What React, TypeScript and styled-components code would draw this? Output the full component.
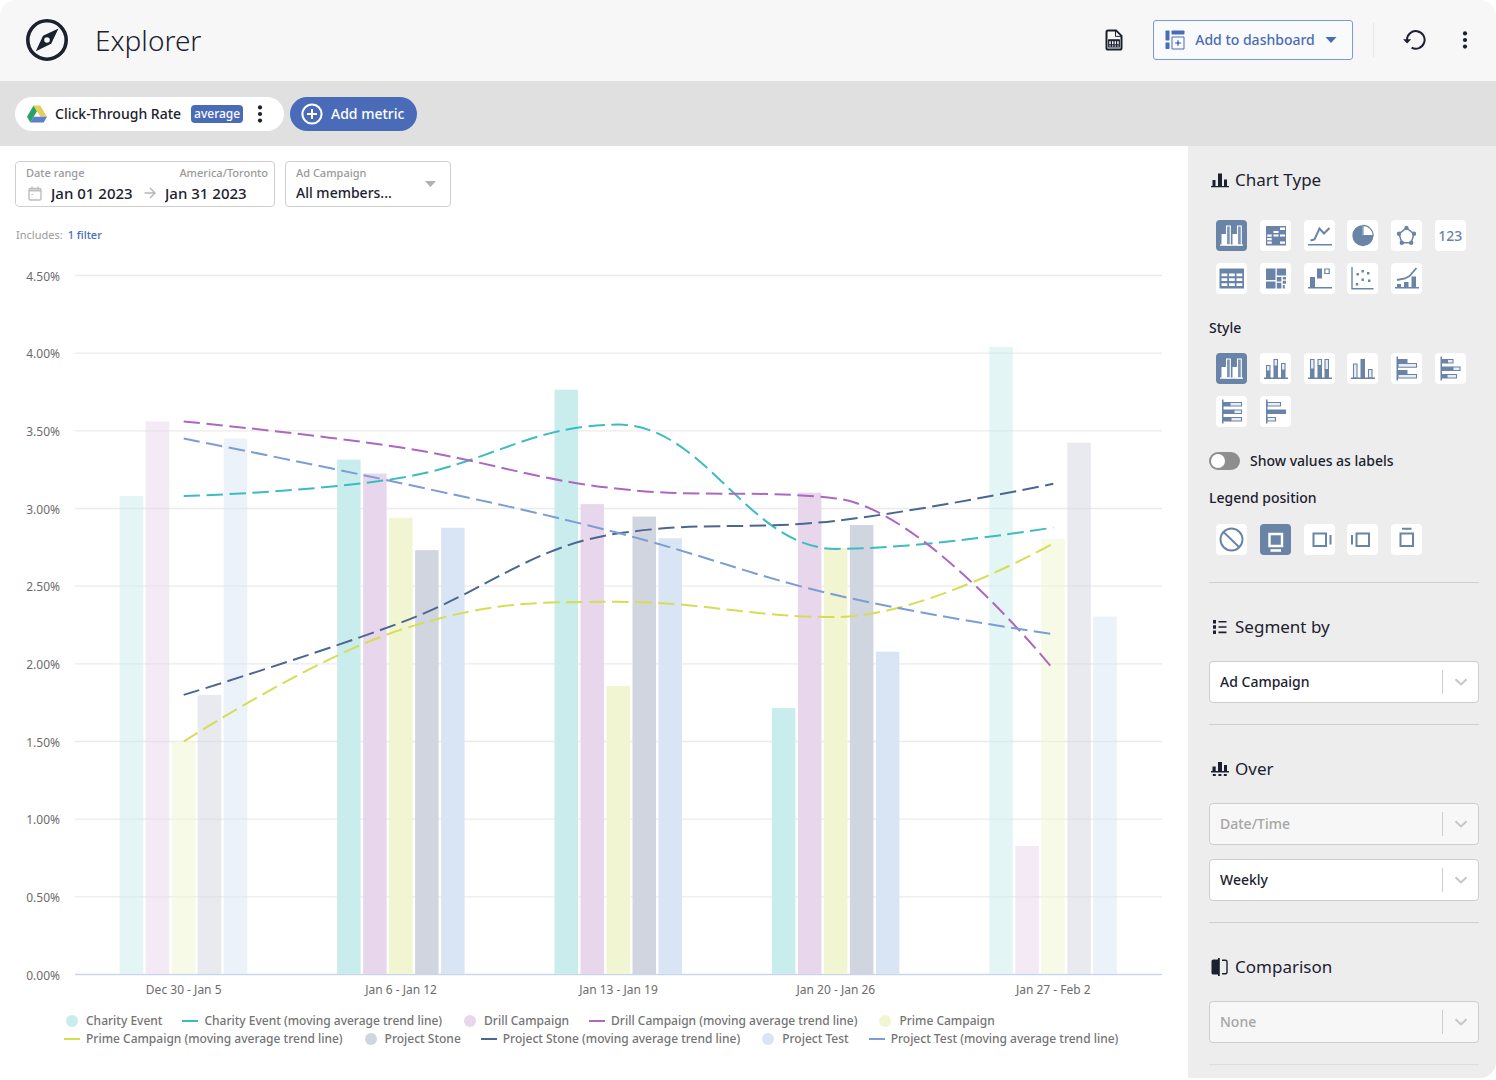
import React from 'react';
import styled, { createGlobalStyle } from 'styled-components';

const ink = '#1c2130';
const blue = '#4a6cb8';
const steel = '#6a84a8';

const GlobalStyle = createGlobalStyle`
  *, *::before, *::after { box-sizing: border-box; }
  body {
    margin: 0;
    background: #fff;
    color: ${ink};
    font-family: "Noto Sans", "Open Sans", sans-serif;
    font-size: 14px;
    line-height: 20px;
  }
  button, input, select { font: inherit; color: inherit; margin: 0; }
  button { cursor: pointer; }
  h1, h2, h3, p, ul { margin: 0; padding: 0; }
  svg { display: block; flex: none; }
`;

const Frame = styled.div`
  display: flex;
  flex-direction: column;
  border-radius: 16px;
  overflow: hidden;
  background: #fff;
`;

const Header = styled.header`
  display: flex;
  align-items: center;
  justify-content: space-between;
  height: 81px;
  padding: 0 18px 1px 26px;
  background: #f7f7f7;
`;

const Brand = styled.div`
  display: flex;
  align-items: center;
  gap: 27px;
`;

const Title = styled.h1`
  font-size: 28px;
  line-height: 40px;
  font-weight: 300;
`;

const Actions = styled.div`
  display: flex;
  align-items: center;
`;

const IconButton = styled.button<{ $gap?: number }>`
  display: flex;
  align-items: center;
  justify-content: center;
  width: 26px;
  height: 34px;
  margin-left: ${(p) => p.$gap ?? 0}px;
  padding: 0;
  border: 0;
  background: none;
`;

const DashboardButton = styled.button`
  display: flex;
  align-items: center;
  justify-content: space-between;
  width: 200px;
  height: 40px;
  margin: 0 20px 0 26px;
  padding: 0 15px 0 11px;
  border: 1px solid #7f9ad2;
  border-radius: 3px;
  background: #f9fafc;
  color: ${blue};
  font-weight: 500;
`;

const Divider = styled.span`
  width: 1px;
  height: 34px;
  margin-right: 27px;
  background: #e4e4e4;
`;

const MetricBar = styled.div`
  display: flex;
  align-items: center;
  gap: 6px;
  height: 65px;
  padding: 0 15px;
  background: #e0e0e0;
`;

const MetricPill = styled.div`
  display: flex;
  align-items: center;
  width: 269px;
  height: 34px;
  padding-left: 12px;
  border-radius: 17px;
  background: #fff;
  font-weight: 500;
`;

const MetricName = styled.span`
  flex: none;
  margin: 0 10px 0 8px;
`;

const Badge = styled.span`
  height: 18px;
  margin-right: 4px;
  padding: 0 3px;
  border-radius: 4px;
  background: ${blue};
  color: #fff;
  font-size: 12px;
  line-height: 18px;
`;

const AddMetric = styled.button`
  display: flex;
  align-items: center;
  gap: 8px;
  height: 34px;
  padding: 0 13px 0 11px;
  border: 0;
  border-radius: 17px;
  background: ${blue};
  color: #fff;
  font-weight: 500;
`;

const Body = styled.div`
  display: flex;
`;

const Main = styled.main`
  flex: 1;
  min-width: 0;
  padding-top: 15px;
`;

const Filters = styled.div`
  display: flex;
  gap: 10px;
  padding: 0 15px;
`;

const FilterBox = styled.div<{ $width: number }>`
  display: flex;
  flex-direction: column;
  width: ${(p) => p.$width}px;
  height: 46px;
  padding: 2px 6px 0 10px;
  border: 1px solid #cfcfcf;
  border-radius: 4px;
`;

const FilterLabels = styled.div`
  display: flex;
  justify-content: space-between;
  color: #9a9a9a;
  font-size: 11px;
  line-height: 18px;
  font-weight: 500;
`;

const DateLine = styled.div`
  display: flex;
  align-items: center;
  gap: 9px;
  padding-left: 2px;
`;

const DateInput = styled.input`
  width: 84px;
  height: 22px;
  padding: 0;
  border: 0;
  background: none;
  font-size: 15px;
  font-weight: 500;
`;

const FilterSelectBox = styled(FilterBox)`
  display: grid;
  grid-template: 18px 22px / 1fr;
  padding-right: 14px;
`;

const FilterLabel = styled.label`
  grid-area: 1 / 1;
  color: #9a9a9a;
  font-size: 11px;
  line-height: 18px;
  font-weight: 500;
`;

const FilterSelect = styled.select`
  grid-area: 2 / 1;
  appearance: none;
  padding: 0;
  border: 0;
  background: none;
  font-weight: 500;
`;

const FilterCaret = styled.svg`
  grid-area: 1 / 1 / 3 / 2;
  place-self: center end;
  pointer-events: none;
`;

const Includes = styled.p`
  display: flex;
  gap: 5px;
  padding: 18px 16px 5px;
  color: #9a9a9a;
  font-size: 11px;
`;

const FilterLink = styled.a`
  color: ${blue};
  text-decoration: none;
  font-weight: 500;
`;

const ChartSvg = styled.svg`
  width: 100%;
  height: auto;
`;

const ChartText = styled.text`
  fill: #6c6c6c;
  font-size: 12px;
`;

const Legend = styled.ul`
  display: flex;
  flex-wrap: wrap;
  column-gap: 20px;
  padding: 12px 40px 24px 64px;
  list-style: none;
  color: #747474;
  font-size: 12px;
  line-height: 18px;
  font-weight: 500;
`;

const LegendItem = styled.li`
  display: flex;
  align-items: center;
  gap: 6px;
`;

const Swatch = styled.span<{ $line: boolean; $color: string }>`
  width: ${(p) => (p.$line ? 16 : 12)}px;
  height: ${(p) => (p.$line ? 2 : 12)}px;
  margin: 0 ${(p) => (p.$line ? 0 : 2)}px;
  border-radius: ${(p) => (p.$line ? 0 : 6)}px;
  background: ${(p) => p.$color};
`;

const Sidebar = styled.aside`
  flex: none;
  width: 308px;
  padding: 22px 17px 13px 21px;
  background: #ededed;
`;

const Section = styled.section`
  & + & {
    margin-top: 21px;
    padding-top: 32px;
    border-top: 1px solid #d0d0d0;
  }
  &:first-child { margin-bottom: 27px; }
`;

const EndRule = styled.hr`
  height: 1px;
  margin: 21px 0 0;
  border: 0;
  background: #dcdcdc;
`;

const SectionTitle = styled.h2`
  display: flex;
  align-items: center;
  gap: 6px;
  padding-left: 2px;
  font-size: 17px;
  line-height: 24px;
  font-weight: 400;
`;

const SubTitle = styled.h3<{ $gap?: number }>`
  margin-top: ${(p) => p.$gap ?? 24}px;
  font-size: 14px;
  line-height: 20px;
  font-weight: 500;
`;

const Tiles = styled.div<{ $gap: number }>`
  display: grid;
  grid-template-columns: repeat(6, 1fr);
  justify-items: center;
  row-gap: 12px;
  margin-top: ${(p) => p.$gap}px;
  padding: 0 7px 0 1px;
`;

const Tile = styled.button<{ $active: boolean }>`
  display: flex;
  align-items: center;
  justify-content: center;
  width: 31px;
  height: 31px;
  padding: 0;
  border: 0;
  border-radius: 4px;
  background: ${(p) => (p.$active ? steel : '#fff')};
  color: ${(p) => (p.$active ? '#fff' : steel)};
  font-size: 14px;
  font-weight: 500;
`;

const SwitchLabel = styled.label`
  display: flex;
  align-items: center;
  gap: 10px;
  margin: 24px 0 17px;
  font-weight: 500;
`;

const Switch = styled.input`
  appearance: none;
  display: flex;
  align-items: center;
  width: 31px;
  height: 18px;
  padding: 0 2px;
  border-radius: 9px;
  background: #8e8e8e;
  &::before {
    content: '';
    width: 14px;
    height: 14px;
    border-radius: 7px;
    background: #fff;
  }
  &:checked { justify-content: flex-end; background: ${blue}; }
`;

const SelectBox = styled.div`
  display: grid;
  align-items: center;
  margin-top: 22px;
  & + & { margin-top: 14px; }
`;

const Select = styled.select`
  grid-area: 1 / 1;
  appearance: none;
  width: 100%;
  height: 42px;
  padding: 0 50px 0 10px;
  border: 1px solid #cdcdcd;
  border-radius: 4px;
  background: #fff;
  font-weight: 500;
  &:disabled { background: #f7f7f7; color: #a6a6a6; opacity: 1; }
`;

const Indicator = styled.span`
  grid-area: 1 / 1;
  justify-self: end;
  display: flex;
  align-items: center;
  width: 37px;
  height: 24px;
  border-left: 1px solid #cdcdcd;
  padding-left: 11px;
  pointer-events: none;
`;

/* ---- icons ---- */

const Kebab = () => (
  <svg width="6" height="20" viewBox="0 0 6 20" fill={ink}>
    <circle cx="3" cy="3.4" r="2.1" /><circle cx="3" cy="10" r="2.1" /><circle cx="3" cy="16.6" r="2.1" />
  </svg>
);

const Compass = () => (
  <svg width="42" height="42" viewBox="0 0 42 42">
    <circle cx="21" cy="21" r="19.2" fill="none" stroke={ink} strokeWidth="3.600" />
    <path fillRule="evenodd" fill={ink} d="M32.5 9.5 25.2 24.8 9.8 32.2 17 16.8ZM21 18.2a2.8 2.8 0 1 0 0 5.6 2.8 2.8 0 0 0 0-5.6Z" />
  </svg>
);

const SheetIcon = () => (
  <svg width="18" height="22" viewBox="0 0 18 22" fill="none" stroke={ink}>
    <path strokeWidth="2" d="M1.5 3q0-1.6 1.6-1.6H11l5.5 5.5V19q0 1.6-1.6 1.6H3.1q-1.6 0-1.6-1.6Z" />
    <path strokeWidth="1" d="M10.5 2v5.4H16" />
    <path strokeWidth="1.2" d="M3.700 11.500h10.600v6.500H3.700ZM3.700 15.800h10.600M6.400 11.500v6.500M9 11.500v6.500M11.600 11.500v6.500" />
    <path strokeWidth="2" d="M3.200 11.200h11.600" />
  </svg>
);

const DashboardIcon = () => (
  <svg width="20" height="20" viewBox="0 0 20 20" fill={blue}>
    <rect x="0.5" y="0.5" width="4" height="10" rx="0.8" />
    <rect x="0.5" y="12.5" width="4" height="6.5" rx="0.8" />
    <rect x="6.5" y="0.5" width="13" height="4" rx="0.8" />
    <path fill="none" stroke={blue} d="M7 7h12v12H7ZM13 10v6M10 13h6" />
    <path d="M13 11.3 14.7 13 13 14.7 11.3 13Z" />
  </svg>
);

const Caret = ({ color }: { color: string }) => (
  <svg width="12" height="6" viewBox="0 0 12 6"><path fill={color} d="M0.5 0h11L6 6Z" /></svg>
);

const ResetIcon = () => (
  <svg width="23" height="22" viewBox="0 0 23 22">
    <path fill="none" stroke={ink} strokeWidth="2" d="M4 12.500V11A8.800 8.800 0 1 1 8.600 18.600" />
    <path fill={ink} d="M0 10.2h8.2L4.1 14.4Z" />
  </svg>
);

const DriveIcon = () => (
  <svg width="20" height="18" viewBox="0 0 20 18">
    <path fill="#2aa263" d="M6.6 0.4 0 11.8 3.3 17.5 10 6.2Z" />
    <path fill="#e3d05a" d="M6.6 0.4h6.7L20 11.8h-6.6Z" />
    <path fill="#5b7fd0" d="M3.3 17.5 6.7 11.8H20l-3.3 5.7Z" />
  </svg>
);

const PlusCircle = () => (
  <svg width="22" height="22" viewBox="0 0 22 22" fill="none" stroke="#fff" strokeWidth="2">
    <circle cx="11" cy="11" r="9.6" /><path d="M11 6v10M6 11h10" />
  </svg>
);

const CalendarIcon = () => (
  <svg width="14" height="15" viewBox="0 0 14 15" fill="none" stroke="#bdbdbd">
    <rect x="1" y="2.5" width="12" height="11.5" rx="1.5" strokeWidth="1.4" />
    <path strokeWidth="1.800" d="M1 4.500h12" />
    <path strokeWidth="1.400" d="M4 0.500v3M10 0.500v3" />
    <path d="M3.500 8.500h1.500" />
  </svg>
);

const ArrowIcon = () => (
  <svg width="12" height="12" viewBox="0 0 12 12" fill="none" stroke="#b5b5b5" strokeWidth="1.4">
    <path d="M0.5 6h10M6 1l5 5-5 5" />
  </svg>
);

const Chevron = () => (
  <svg width="14" height="8" viewBox="0 0 14 8" fill="none" stroke="#c6c6c6" strokeWidth="2">
    <path d="M1.5 1.2 7 6.4l5.5-5.2" />
  </svg>
);

const BarsIcon = () => (
  <svg width="18" height="16" viewBox="0 0 18 16" fill={ink}>
    <path d="M1.5 8h3v6h-3ZM7 1.5h4V14H7ZM13 7.5h3V14h-3ZM0 14h18v1.2H0Z" />
  </svg>
);

const ListIcon = () => (
  <svg width="18" height="16" viewBox="0 0 18 16" fill={ink}>
    <path d="M2 1h3v3.4H2ZM2 6.3h3v3.4H2ZM2 11.6h3V15H2ZM7.5 2h8v1.6h-8ZM7.5 7.2h8v1.6h-8ZM7.5 12.6h8v1.6h-8Z" />
  </svg>
);

const OverIcon = () => (
  <svg width="18" height="16" viewBox="0 0 18 16" fill={ink}>
    <path d="M1.5 5.5h3.2V10H1.5ZM7 1h4v9H7ZM13 4h3v6h-3ZM0 10h18v1.4H0ZM1.8 13h3v2h-3ZM7.4 13h3v2h-3ZM12.8 13h3v2h-3Z" />
  </svg>
);

const CompareIcon = () => (
  <svg width="18" height="18" viewBox="0 0 18 18" fill={ink}>
    <path d="M2.4 1.5H7V0h1.800v18H7v-1.500H2.400Q0.500 16.500 0.500 15V3Q0.500 1.500 2.400 1.500Z" />
    <path fill="none" stroke={ink} strokeWidth="1.4" d="M11 2.300h3.500q1.500 0 1.500 1.500v10.400q0 1.500-1.500 1.500H11" />
  </svg>
);

/* Shapes of a tile glyph on a 31-unit grid: f = solid, o = outlined, w = knocked out, l = stroked path. */
type Glyph = { f?: string; o?: string; w?: string; l?: string; lw?: number };

const Mark = ({ g }: { g: Glyph }) => (
  <svg width="31" height="31" viewBox="0 0 31 31">
    {g.f && <path d={g.f} fill="currentColor" />}
    {g.o && <path d={g.o} fill="currentColor" fillOpacity="0.14" stroke="currentColor" strokeWidth="1.1" />}
    {g.w && <path d={g.w} fill="#fff" />}
    {g.l && <path d={g.l} fill="none" stroke="currentColor" strokeWidth={g.lw ?? 1.8} />}
  </svg>
);

const clustered: Glyph = {
  f: 'M4 24.500h23v1.300H4ZM5.500 14h4.500v11h-4.500ZM16.500 14h4.500v11h-4.500Z',
  o: 'M10.500 6h3.800v19h-3.800ZM21.500 6h3.800v19h-3.800Z',
};

const chartTypes: { name: string; glyph?: Glyph }[] = [
  { name: 'Column chart', glyph: clustered },
  {
    name: 'Heat map',
    glyph: {
      f: 'M6 6h20v19.500H6Z',
      w: 'M20 7.500h5v2.500h-5ZM13.500 11h5v2h-5ZM13.500 14.500h5v2h-5ZM7.200 14.500h4.500v2.200H7.200ZM7.200 18h4.500v2.200H7.200ZM7.200 21.500h4.500v2.300H7.200ZM20 14.500h5v2h-5ZM20 21.500h5v2.300h-5Z',
    },
  },
  { name: 'Line chart', glyph: { l: 'M6.500 20.500 10.500 19.500 15.500 8.500 20 13.500 25.500 8', lw: 2, f: 'M4 24h24v1.600H4Z' } },
  {
    name: 'Pie chart',
    glyph: { f: 'M15.500 5A10.600 10.600 0 1 0 26.500 16H15.500Z', l: 'M16 5.400V15.500h10.200A10.200 10.200 0 0 0 16 5.400Z', lw: 1.1 },
  },
  {
    name: 'Radar chart',
    glyph: {
      l: 'M15.500 8 23 13.800 20.200 22.800H10.800L8 13.800Z',
      lw: 1.5,
      f: 'M15.500 5.700a2.200 2.200 0 1 1 0 4.400 2.200 2.200 0 1 1 0-4.400ZM23 11.600a2.200 2.200 0 1 1 0 4.400 2.200 2.200 0 1 1 0-4.400ZM8 11.600a2.200 2.200 0 1 1 0 4.400 2.200 2.200 0 1 1 0-4.400ZM20.200 20.600a2.200 2.200 0 1 1 0 4.400 2.200 2.200 0 1 1 0-4.400ZM10.800 20.600a2.200 2.200 0 1 1 0 4.400 2.200 2.200 0 1 1 0-4.400Z',
    },
  },
  { name: 'Number' },
  {
    name: 'Table',
    glyph: {
      f: 'M3.500 5.500h24.500v20H3.500Z',
      w: 'M5.500 10.500h5.800v2.800H5.500ZM13 10.500h5.800v2.800H13ZM20.500 10.500h5.800v2.800h-5.800ZM5.500 15.300h5.800v2.800H5.500ZM13 15.300h5.800v2.800H13ZM20.500 15.300h5.800v2.800h-5.800ZM5.500 20.200h5.800v2.800H5.500ZM13 20.200h5.800v2.800H13ZM20.500 20.200h5.800v2.800h-5.800Z',
    },
  },
  {
    name: 'Tree map',
    glyph: { f: 'M6 5.500h9.500v11.500H6ZM16.800 5.500H26v7h-9.200ZM6 18.500h9.500v7H6ZM16.800 14h4.600v4.500h-4.600ZM16.800 19.800h4.600v5.700h-4.600ZM22.800 14H26v2.600h-3.200ZM22.800 17.800H26v3h-3.200ZM22.800 22h2v3.500h-2Z' },
  },
  {
    name: 'Waterfall chart',
    glyph: { f: 'M4 24h24v1.500H4ZM6 14h5v11H6ZM13 5.500h5v10h-5Z', l: 'M20.800 6h4.400v4.500h-4.400Z', lw: 1.2 },
  },
  {
    name: 'Scatter plot',
    glyph: {
      l: 'M5 4v21.800h21.500',
      lw: 1.4,
      f: 'M9.500 10h2.400v2.400H9.500ZM14.500 7h2.400v2.400h-2.400ZM20 9h2.400v2.400H20ZM14.500 15.500h2.400v2.400h-2.400ZM21 16.500h2.400v2.400H21ZM8.800 20h2.400v2.400H8.800Z',
    },
  },
  {
    name: 'Combination chart',
    glyph: { f: 'M4 24h24v1.500H4ZM6 21h4v4H6ZM13 19h4.500v6H13ZM20.500 13.500H25V25h-4.500Z', l: 'M6 17 14 15.500 18.500 13 25.500 5', lw: 1.8 },
  },
];

const styles: { name: string; glyph: Glyph }[] = [
  { name: 'Clustered column', glyph: clustered },
  {
    name: 'Stacked column',
    glyph: { f: 'M4 24.500h24v1.400H4ZM6 18h4.500v7H6ZM13.500 13h4.500v12h-4.500ZM21 17h4.500v8H21Z', o: 'M6.500 12.500H10V18H6.500ZM14 6.500h3.500V13H14ZM21.500 10.500H25V17h-3.500Z' },
  },
  {
    name: 'Full stacked column',
    glyph: { f: 'M4 24.500h24v1.400H4ZM6 16h4.500v9H6ZM13.500 12.500h4.500V25h-4.500ZM20.500 16.500H25V25h-4.500Z', o: 'M6.500 6.500H10V16H6.500ZM14 6.500h3.500v6H14ZM21 6.500h3.500v10H21Z' },
  },
  {
    name: 'Overlapping column',
    glyph: { f: 'M4 24.500h24v1.400H4ZM13.500 6H18v19h-4.500Z', o: 'M6.500 11H10v14H6.500ZM21.500 16.500H25V25h-3.500Z' },
  },
  {
    name: 'Clustered bar',
    glyph: { f: 'M5.500 3.500H7v24H5.500ZM7 6h9.500v4H7ZM7 17h9.500v4H7Z', o: 'M7 10.500h18.500v3.700H7ZM7 21.500h18.500v3.500H7Z' },
  },
  {
    name: 'Stacked bar',
    glyph: { f: 'M5.500 3.500H7v24H5.500ZM7 6h5.500v4.500H7ZM7 13.500h11V18H7ZM7 21h5v4.500H7Z', o: 'M12.500 6.500H18V10h-5.500ZM18 14h7v3.500h-7ZM12 21.500h9.500V25H12Z' },
  },
  {
    name: 'Full stacked bar',
    glyph: { f: 'M6 3.500h1.500v24H6ZM7 6h7v4.500H7ZM7 13.500h11V18H7ZM7 21h8v4.500H7Z', o: 'M14 6.500h11.500V10H14ZM18 14h7.500v3.500H18ZM15 21.500h10.500V25H15Z' },
  },
  {
    name: 'Overlapping bar',
    glyph: { f: 'M6 3.500h1.500v24H6ZM7 13.500h19V18H7Z', o: 'M7 6.500h13.500V10H7ZM7 21.500h8.500V25H7Z' },
  },
];

const positions: { name: string; glyph: Glyph }[] = [
  { name: 'No legend', glyph: { l: 'M15.500 4.500a11 11 0 1 1 0 22 11 11 0 1 1 0-22ZM7.500 8l16 15.500', lw: 1.9 } },
  { name: 'Legend at the bottom', glyph: { l: 'M9.500 10h12.500v12H9.500ZM10.500 26.500h10.500', lw: 2.4 } },
  { name: 'Legend on the right', glyph: { l: 'M9.500 9.500h12.500v12.500H9.500ZM26.500 11v9.500', lw: 2 } },
  { name: 'Legend on the left', glyph: { l: 'M9.500 9.500h12.500v12.500H9.500ZM5 11v9.500', lw: 2 } },
  { name: 'Legend at the top', glyph: { l: 'M9.500 9.500h12.500v12.500H9.500ZM11 4.800h9.500', lw: 2 } },
];

/* ---- chart ---- */

const PLOT = { left: 75, right: 1162, top: 275.5, bottom: 974.5, max: 4.5 };
const weeks = ['Dec 30 - Jan 5', 'Jan 6 - Jan 12', 'Jan 13 - Jan 19', 'Jan 20 - Jan 26', 'Jan 27 - Feb 2'];
const ticks = [4.5, 4, 3.5, 3, 2.5, 2, 1.5, 1, 0.5, 0];

const series = [
  { name: 'Charity Event', bar: '#c9ecec', line: '#3dbcc0', values: [3.08, 3.315, 3.765, 1.715, 4.04] },
  { name: 'Drill Campaign', bar: '#e7d6ec', line: '#ad67c1', values: [3.56, 3.225, 3.028, 3.102, 0.828] },
  { name: 'Prime Campaign', bar: '#f2f5d1', line: '#d5de52', values: [1.5, 2.94, 1.858, 2.744, 2.806] },
  { name: 'Project Stone', bar: '#d1d5e0', line: '#4b6791', values: [1.8, 2.732, 2.948, 2.894, 3.424] },
  { name: 'Project Test', bar: '#d9e5f4', line: '#7a9dd6', values: [3.45, 2.876, 2.808, 2.078, 2.304] },
];

const step = (PLOT.right - PLOT.left) / weeks.length;
const centre = (i: number) => PLOT.left + step * (i + 0.5);
const yOf = (v: number) => PLOT.bottom - (v / PLOT.max) * (PLOT.bottom - PLOT.top);

/* Two-period moving average; the first period has only itself. */
const trend = (v: number[]) => v.map((x, i) => (i ? (x + v[i - 1]) / 2 : x));

/* Smooth path whose control points never overshoot the neighbouring values. */
function spline(values: number[]) {
  const pts = values.map((v, i) => [centre(i), yOf(v)]);
  let out = `M${pts[0][0]} ${pts[0][1]}`;
  let [rx, ry] = pts[0];
  for (let i = 1; i < pts.length; i++) {
    const [x, y] = pts[i];
    const [px, py] = pts[i - 1];
    let [lx, ly, nx, ny] = [x, y, x, y];
    if (i < pts.length - 1) {
      const [qx, qy] = pts[i + 1];
      lx = (1.5 * x + px) / 2.5;
      ly = (1.5 * y + py) / 2.5;
      nx = (1.5 * x + qx) / 2.5;
      ny = (1.5 * y + qy) / 2.5;
      const fix = ((ny - ly) * (nx - x)) / (nx - lx) + y - ny;
      ly += fix;
      ny += fix;
      const clamp = (c: number, a: number, b: number) => Math.min(Math.max(c, Math.min(a, b)), Math.max(a, b));
      const cl = clamp(ly, py, y);
      if (cl !== ly) { ly = cl; ny = 2 * y - ly; }
      const cn = clamp(ny, qy, y);
      if (cn !== ny) { ny = cn; ly = 2 * y - ny; }
    }
    out += `C${rx} ${ry} ${lx} ${ly} ${x} ${y}`;
    [rx, ry] = [nx, ny];
  }
  return out;
}

const Chart = () => (
  <ChartSvg viewBox="0 250 1188 750" role="img" aria-label="Click-Through Rate by Ad Campaign, weekly">
    {ticks.map((t) => (
      <g key={t}>
        <line x1={PLOT.left} x2={PLOT.right} y1={yOf(t)} y2={yOf(t)} stroke={t ? '#ebebeb' : '#ccd6eb'} strokeWidth="1.4" />
        <ChartText x="60" y={yOf(t) + 5} textAnchor="end">{t.toFixed(2)}%</ChartText>
      </g>
    ))}
    {weeks.map((w, i) => (
      <ChartText key={w} x={centre(i)} y="994" textAnchor="middle">{w}</ChartText>
    ))}
    {series.map((s, k) =>
      s.values.map((v, i) => (
        <rect
          key={`${s.name}${i}`}
          x={centre(i) - 64 + 26 * k}
          y={yOf(v)}
          width="23.500"
          height={PLOT.bottom - yOf(v)}
          fill={s.bar}
          opacity={i === 0 || i === 4 ? 0.5 : 1}
        />
      )),
    )}
    <line x1={PLOT.left} x2={PLOT.right} y1={PLOT.bottom} y2={PLOT.bottom} stroke="#ccd6eb" strokeWidth="1" />
    {series.map((s) => (
      <path key={s.name} d={spline(trend(s.values))} fill="none" stroke={s.line} strokeWidth="2" strokeDasharray="16.500 6.450" />
    ))}
  </ChartSvg>
);

const TileSet = ({ items, selected, gap, label }: { items: { name: string; glyph?: Glyph }[]; selected: number; gap: number; label: string }) => (
  <Tiles $gap={gap} role="group" aria-label={label}>
    {items.map((it, i) => (
      <Tile key={it.name} type="button" $active={i === selected} aria-pressed={i === selected} aria-label={it.name}>
        {it.glyph ? <Mark g={it.glyph} /> : '123'}
      </Tile>
    ))}
  </Tiles>
);

const Dropdown = ({ label, value, disabled }: { label: string; value: string; disabled?: boolean }) => (
  <SelectBox>
    <Select aria-label={label} disabled={disabled} defaultValue={value}>
      <option>{value}</option>
    </Select>
    <Indicator><Chevron /></Indicator>
  </SelectBox>
);

export default function App() {
  return (
    <>
      <GlobalStyle />
      <Frame>
        <Header>
          <Brand>
            <Compass />
            <Title>Explorer</Title>
          </Brand>
          <Actions>
            <IconButton type="button" aria-label="Export spreadsheet"><SheetIcon /></IconButton>
            <DashboardButton type="button">
              <DashboardIcon />
              Add to dashboard
              <Caret color={blue} />
            </DashboardButton>
            <Divider />
            <IconButton type="button" aria-label="Reset"><ResetIcon /></IconButton>
            <IconButton type="button" aria-label="More" $gap={25}><Kebab /></IconButton>
          </Actions>
        </Header>
        <MetricBar>
          <MetricPill>
            <DriveIcon />
            <MetricName>Click-Through Rate</MetricName>
            <Badge>average</Badge>
            <IconButton type="button" aria-label="Metric options"><Kebab /></IconButton>
          </MetricPill>
          <AddMetric type="button"><PlusCircle />Add metric</AddMetric>
        </MetricBar>
        <Body>
          <Main>
            <Filters>
              <FilterBox $width={260}>
                <FilterLabels><label htmlFor="from">Date range</label><span>America/Toronto</span></FilterLabels>
                <DateLine>
                  <CalendarIcon />
                  <DateInput id="from" defaultValue="Jan 01 2023" />
                  <ArrowIcon />
                  <DateInput aria-label="End date" defaultValue="Jan 31 2023" />
                </DateLine>
              </FilterBox>
              <FilterSelectBox $width={166}>
                <FilterLabel htmlFor="campaign">Ad Campaign</FilterLabel>
                <FilterSelect id="campaign"><option>All members...</option></FilterSelect>
                <FilterCaret width="11" height="6" viewBox="0 0 11 6"><path fill="#b0b0b0" d="M0 0h11L5.500 6Z" /></FilterCaret>
              </FilterSelectBox>
            </Filters>
            <Includes>Includes: <FilterLink href="#filters">1 filter</FilterLink></Includes>
            <Chart />
            <Legend>
              {series.map((s) => (
                <React.Fragment key={s.name}>
                  <LegendItem><Swatch $line={false} $color={s.bar} />{s.name}</LegendItem>
                  <LegendItem><Swatch $line $color={s.line} />{s.name} (moving average trend line)</LegendItem>
                </React.Fragment>
              ))}
            </Legend>
          </Main>
          <Sidebar>
            <Section>
              <SectionTitle><BarsIcon />Chart Type</SectionTitle>
              <TileSet items={chartTypes} selected={0} gap={28} label="Chart type" />
              <SubTitle>Style</SubTitle>
              <TileSet items={styles} selected={0} gap={15} label="Style" />
              <SwitchLabel><Switch type="checkbox" role="switch" />Show values as labels</SwitchLabel>
              <SubTitle $gap={0}>Legend position</SubTitle>
              <TileSet items={positions} selected={1} gap={16} label="Legend position" />
            </Section>
            <Section>
              <SectionTitle><ListIcon />Segment by</SectionTitle>
              <Dropdown label="Segment by" value="Ad Campaign" />
            </Section>
            <Section>
              <SectionTitle><OverIcon />Over</SectionTitle>
              <Dropdown label="Over" value="Date/Time" disabled />
              <Dropdown label="Interval" value="Weekly" />
            </Section>
            <Section>
              <SectionTitle><CompareIcon />Comparison</SectionTitle>
              <Dropdown label="Comparison" value="None" disabled />
            </Section>
            <EndRule />
          </Sidebar>
        </Body>
      </Frame>
    </>
  );
}
